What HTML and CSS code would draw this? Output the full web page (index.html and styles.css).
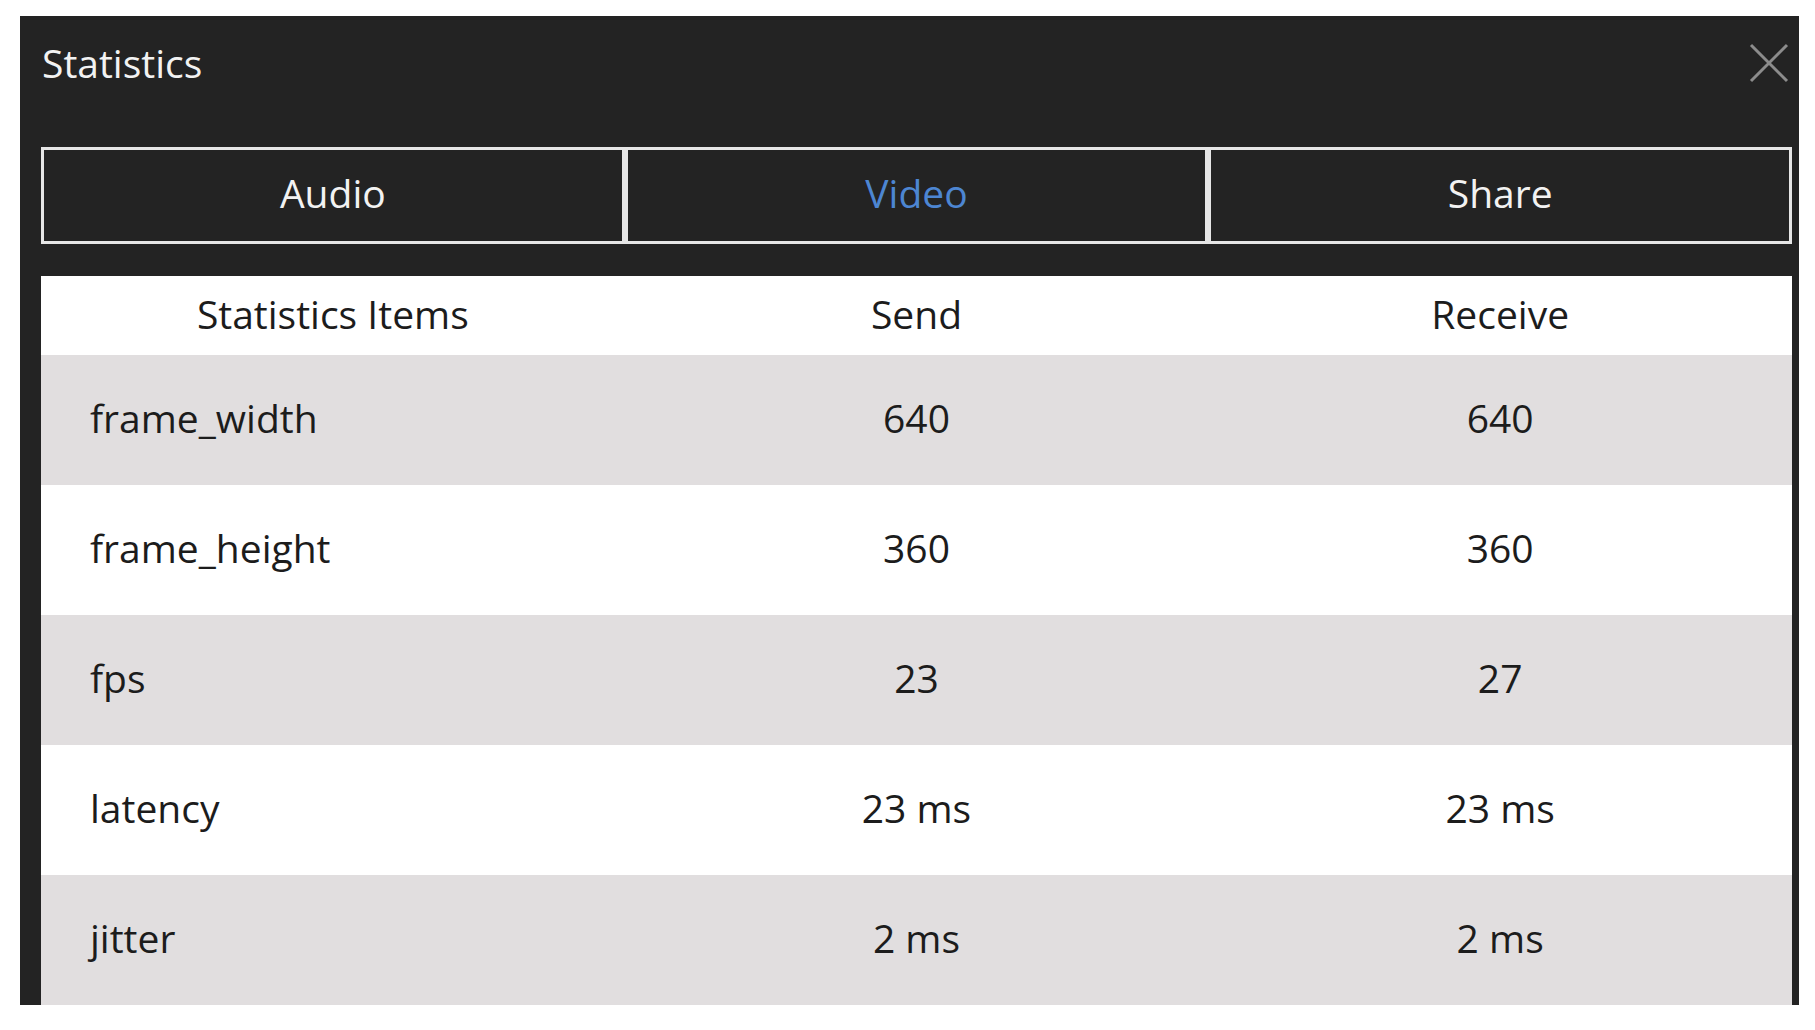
FILE: index.html
```html
<!DOCTYPE html>
<html lang="en">
<head>
<meta charset="utf-8">
<title>Statistics</title>
<link rel="stylesheet" href="styles.css">
</head>
<body>
<div class="panel">
  <div class="titlebar">
    <div class="title">Statistics</div>
    <button class="close" aria-label="Close">
      <svg width="40" height="40" viewBox="0 0 40 40"><path d="M2 2 L38 38 M38 2 L2 38" stroke="#8c8c8c" stroke-width="3" fill="none"/></svg>
    </button>
  </div>
  <div class="tabs">
    <div class="tab">Audio</div>
    <div class="tab active">Video</div>
    <div class="tab">Share</div>
  </div>
  <div class="table">
    <div class="row head">
      <div class="cell first center">Statistics Items</div>
      <div class="cell">Send</div>
      <div class="cell">Receive</div>
    </div>
    <div class="row alt">
      <div class="cell first">frame_width</div>
      <div class="cell">640</div>
      <div class="cell">640</div>
    </div>
    <div class="row">
      <div class="cell first">frame_height</div>
      <div class="cell">360</div>
      <div class="cell">360</div>
    </div>
    <div class="row alt">
      <div class="cell first">fps</div>
      <div class="cell">23</div>
      <div class="cell">27</div>
    </div>
    <div class="row">
      <div class="cell first">latency</div>
      <div class="cell">23 ms</div>
      <div class="cell">23 ms</div>
    </div>
    <div class="row alt">
      <div class="cell first">jitter</div>
      <div class="cell">2 ms</div>
      <div class="cell">2 ms</div>
    </div>
  </div>
</div>
</body>
</html>
```

FILE: styles.css
```css
html, body {
  margin: 0;
  padding: 0;
  background: #ffffff;
}

body {
  font-family: "Open Sans", "Noto Sans", sans-serif;
}

.panel {
  margin: 16px 0 0 20px;
  width: 1779px;
  height: 989px;
  background: #232323;
  box-sizing: border-box;
  padding: 0 7px 0 21px;
  display: flex;
  flex-direction: column;
  overflow: hidden;
}

.titlebar {
  height: 131px;
  flex: none;
  display: flex;
  align-items: flex-start;
  justify-content: space-between;
}

.title {
  color: #f2f2f2;
  font-size: 39px;
  line-height: 53px;
  margin-top: 20px;
  margin-left: 1px;
}

.close {
  background: none;
  border: none;
  padding: 0;
  margin-top: 27px;
  margin-right: 3px;
  width: 40px;
  height: 40px;
  display: flex;
}

.tabs {
  height: 97px;
  flex: none;
  display: grid;
  grid-template-columns: repeat(3, 1fr);
}

.tab {
  border: 3px solid #e6e6e6;
  display: flex;
  align-items: center;
  justify-content: center;
  color: #f2f2f2;
  font-size: 39px;
  padding-bottom: 6px;
}

.tab.active {
  color: #4d86d2;
}

.table {
  margin-top: 32px;
  background: #ffffff;
  flex: none;
}

.row {
  display: grid;
  grid-template-columns: repeat(3, 1fr);
  height: 130px;
  color: #1c1c1c;
  font-size: 39px;
}

.row.head {
  height: 79px;
}

.row.alt {
  background: #e1dedf;
}

.cell {
  display: flex;
  align-items: center;
  justify-content: center;
  padding-bottom: 5px;
}

.cell.first {
  justify-content: flex-start;
  padding-left: 49px;
}

.cell.first.center {
  justify-content: center;
  padding-left: 0;
}
```
